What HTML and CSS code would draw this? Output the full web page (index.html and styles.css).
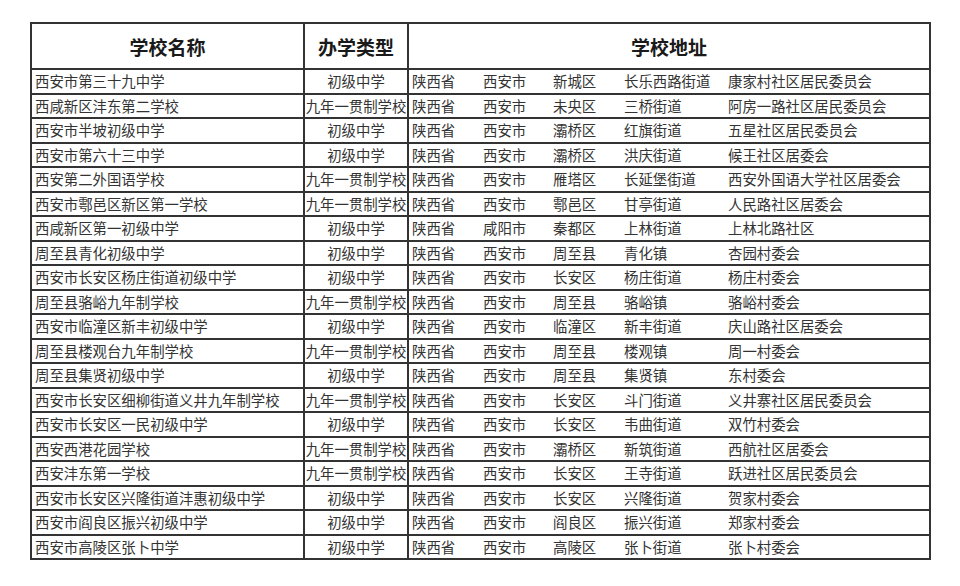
FILE: index.html
```html
<!DOCTYPE html>
<html lang="zh-CN">
<head>
<meta charset="utf-8">
<title>学校名单</title>
<link rel="stylesheet" href="styles.css">
</head>
<body>
<table class="sheet">
  <colgroup>
    <col class="c-name">
    <col class="c-type">
    <col class="c-addr">
  </colgroup>
  <thead>
    <tr><th>学校名称</th><th>办学类型</th><th>学校地址</th></tr>
  </thead>
  <tbody>
    <tr><td>西安市第三十九中学</td><td class="type">初级中学</td><td><div class="addr"><span>陕西省</span><span>西安市</span><span>新城区</span><span>长乐西路街道</span><span>康家村社区居民委员会</span></div></td></tr>
    <tr><td>西咸新区沣东第二学校</td><td class="type">九年一贯制学校</td><td><div class="addr"><span>陕西省</span><span>西安市</span><span>未央区</span><span>三桥街道</span><span>阿房一路社区居民委员会</span></div></td></tr>
    <tr><td>西安市半坡初级中学</td><td class="type">初级中学</td><td><div class="addr"><span>陕西省</span><span>西安市</span><span>灞桥区</span><span>红旗街道</span><span>五星社区居民委员会</span></div></td></tr>
    <tr><td>西安市第六十三中学</td><td class="type">初级中学</td><td><div class="addr"><span>陕西省</span><span>西安市</span><span>灞桥区</span><span>洪庆街道</span><span>候王社区居委会</span></div></td></tr>
    <tr><td>西安第二外国语学校</td><td class="type">九年一贯制学校</td><td><div class="addr"><span>陕西省</span><span>西安市</span><span>雁塔区</span><span>长延堡街道</span><span>西安外国语大学社区居委会</span></div></td></tr>
    <tr><td>西安市鄠邑区新区第一学校</td><td class="type">九年一贯制学校</td><td><div class="addr"><span>陕西省</span><span>西安市</span><span>鄠邑区</span><span>甘亭街道</span><span>人民路社区居委会</span></div></td></tr>
    <tr><td>西咸新区第一初级中学</td><td class="type">初级中学</td><td><div class="addr"><span>陕西省</span><span>咸阳市</span><span>秦都区</span><span>上林街道</span><span>上林北路社区</span></div></td></tr>
    <tr><td>周至县青化初级中学</td><td class="type">初级中学</td><td><div class="addr"><span>陕西省</span><span>西安市</span><span>周至县</span><span>青化镇</span><span>杏园村委会</span></div></td></tr>
    <tr><td>西安市长安区杨庄街道初级中学</td><td class="type">初级中学</td><td><div class="addr"><span>陕西省</span><span>西安市</span><span>长安区</span><span>杨庄街道</span><span>杨庄村委会</span></div></td></tr>
    <tr><td>周至县骆峪九年制学校</td><td class="type">九年一贯制学校</td><td><div class="addr"><span>陕西省</span><span>西安市</span><span>周至县</span><span>骆峪镇</span><span>骆峪村委会</span></div></td></tr>
    <tr><td>西安市临潼区新丰初级中学</td><td class="type">初级中学</td><td><div class="addr"><span>陕西省</span><span>西安市</span><span>临潼区</span><span>新丰街道</span><span>庆山路社区居委会</span></div></td></tr>
    <tr><td>周至县楼观台九年制学校</td><td class="type">九年一贯制学校</td><td><div class="addr"><span>陕西省</span><span>西安市</span><span>周至县</span><span>楼观镇</span><span>周一村委会</span></div></td></tr>
    <tr><td>周至县集贤初级中学</td><td class="type">初级中学</td><td><div class="addr"><span>陕西省</span><span>西安市</span><span>周至县</span><span>集贤镇</span><span>东村委会</span></div></td></tr>
    <tr><td>西安市长安区细柳街道义井九年制学校</td><td class="type">九年一贯制学校</td><td><div class="addr"><span>陕西省</span><span>西安市</span><span>长安区</span><span>斗门街道</span><span>义井寨社区居民委员会</span></div></td></tr>
    <tr><td>西安市长安区一民初级中学</td><td class="type">初级中学</td><td><div class="addr"><span>陕西省</span><span>西安市</span><span>长安区</span><span>韦曲街道</span><span>双竹村委会</span></div></td></tr>
    <tr><td>西安西港花园学校</td><td class="type">九年一贯制学校</td><td><div class="addr"><span>陕西省</span><span>西安市</span><span>灞桥区</span><span>新筑街道</span><span>西航社区居委会</span></div></td></tr>
    <tr><td>西安沣东第一学校</td><td class="type">九年一贯制学校</td><td><div class="addr"><span>陕西省</span><span>西安市</span><span>长安区</span><span>王寺街道</span><span>跃进社区居民委员会</span></div></td></tr>
    <tr><td>西安市长安区兴隆街道沣惠初级中学</td><td class="type">初级中学</td><td><div class="addr"><span>陕西省</span><span>西安市</span><span>长安区</span><span>兴隆街道</span><span>贺家村委会</span></div></td></tr>
    <tr><td>西安市阎良区振兴初级中学</td><td class="type">初级中学</td><td><div class="addr"><span>陕西省</span><span>西安市</span><span>阎良区</span><span>振兴街道</span><span>郑家村委会</span></div></td></tr>
    <tr><td>西安市高陵区张卜中学</td><td class="type">初级中学</td><td><div class="addr"><span>陕西省</span><span>西安市</span><span>高陵区</span><span>张卜街道</span><span>张卜村委会</span></div></td></tr>
  </tbody>
</table>
</body>
</html>
```

FILE: styles.css
```css
html, body {
  margin: 0;
  padding: 0;
  background: #ffffff;
}

body {
  font-family: "Noto Sans CJK SC", "Noto Sans", sans-serif;
  color: #333333;
}

.sheet {
  margin: 22px 0 0 30px;
  width: 899px;
  border-collapse: collapse;
  table-layout: fixed;
  border: 2px solid #333;
}

.c-name { width: 273px; }
.c-type { width: 104px; }
.c-addr { width: 522px; }

.sheet th,
.sheet td {
  border: 2px solid #333;
  padding: 0;
  white-space: nowrap;
  overflow: hidden;
}

.sheet th {
  height: 44px;
  font-size: 19px;
  font-weight: 700;
  color: #1a1a1a;
  text-align: center;
  vertical-align: middle;
}

.sheet td {
  height: 22.5px;
  font-size: 14.4px;
  line-height: 20px;
  padding-left: 3px;
  vertical-align: middle;
}

.sheet td.type {
  text-align: center;
  padding-left: 0;
}

.addr {
  display: grid;
  grid-template-columns: 71px 70px 71px 104px 1fr;
}
```
